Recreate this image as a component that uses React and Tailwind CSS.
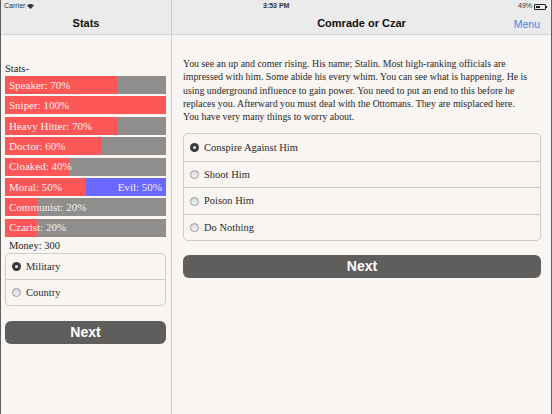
const STATS = [
  { label: "Speaker: 70%", pct: 70 },
  { label: "Sniper: 100%", pct: 100 },
  { label: "Heavy Hitter: 70%", pct: 70 },
  { label: "Doctor: 60%", pct: 60 },
  { label: "Cloaked: 40%", pct: 40 },
  { label: "Moral: 50%", pct: 50, right: "Evil: 50%" },
  { label: "Communist: 20%", pct: 20 },
  { label: "Czarist: 20%", pct: 20 },
];

const STORY = [
  "You see an up and comer rising. His name; Stalin. Most high-ranking officials are",
  "impressed with him. Some abide his every whim. You can see what is happening. He is",
  "using underground influence to gain power. You need to put an end to this before he",
  "replaces you. Afterward you must deal with the Ottomans. They are misplaced here.",
  "You have very many things to worry about.",
];

const serif = { fontFamily: '"Liberation Serif", "DejaVu Serif", serif' };

function Radio({ checked }) {
  if (checked) {
    return (
      <span className="w-[9px] h-[9px] rounded-full bg-[#3a3a3a] flex items-center justify-center shrink-0">
        <span className="w-[3px] h-[3px] rounded-full bg-[#e8e8e8]" />
      </span>
    );
  }
  return <span className="w-[9px] h-[9px] rounded-full border border-[#9a9a9a] bg-gradient-to-b from-[#d8d8d8] to-[#f4f4f4] shrink-0" />;
}

function OptionBox({ items, rowH }) {
  return (
    <div className="rounded-[5px] border border-[#cfcac5] overflow-hidden" style={serif}>
      {items.map((o, i) => (
        <div key={o.label} className={`flex items-center gap-[5px] pl-[6px] text-[10.5px] text-[#2a2a2a] ${i > 0 ? "border-t border-[#cfcac5]" : ""}`} style={{ height: rowH }}>
          <Radio checked={o.checked} />
          <span>{o.label}</span>
        </div>
      ))}
    </div>
  );
}

function NextButton({ className }) {
  return (
    <button className={`w-full h-[23px] rounded-[6px] bg-[#5f5e5c] text-white text-[14px] font-bold ${className}`} style={{ fontFamily: '"Liberation Sans", Arial, sans-serif' }}>
      Next
    </button>
  );
}

function Header({ title, right }) {
  return (
    <div className="h-[35px] bg-[#ebebeb] border-b border-[#d5d5d5] pt-[13px] flex items-center justify-center relative shrink-0" style={{ fontFamily: '"Liberation Sans", Arial, sans-serif' }}>
      <span className="text-[11px] font-semibold text-[#111]">{title}</span>
      {right && <span className="absolute right-[11px] top-[17px] text-[10.5px] text-[#3b86f5]">{right}</span>}
    </div>
  );
}

export default function App() {
  return (
    <div className="w-[552px] h-[414px] flex bg-[#f8f5f2] relative overflow-hidden border-l border-r border-[#5e5e5e]">
      {/* status bar */}
      <div className="absolute z-10 top-0 left-0 right-0 h-[13px] flex items-center justify-between px-[3px] text-[7px] text-[#333]" style={{ fontFamily: '"Liberation Sans", Arial, sans-serif' }}>
        <span className="flex items-center gap-[2px]">
          Carrier
          <svg width="7" height="5" viewBox="0 0 10 7"><path d="M5 7L0 2a7 7 0 0 1 10 0z" fill="#333" /></svg>
        </span>
        <span className="font-semibold absolute left-[262px]">3:53 PM</span>
        <span className="flex items-center gap-[2px] pr-[1px]">
          49%
          <span className="w-[12px] h-[6px] border border-[#222] rounded-[1px] p-[1px] flex">
            <span className="w-1/2 h-full bg-[#222]" />
          </span>
          <span className="w-[1px] h-[2px] bg-[#222] -ml-[2px]" />
        </span>
      </div>

      {/* left panel */}
      <div className="w-[171px] shrink-0 border-r border-[#d0cdca] flex flex-col">
        <Header title="Stats" />
        <div className="px-[4px] pr-[5px]" style={serif}>
          <div className="mt-[28px] text-[10.5px] text-[#222] leading-[12px]">Stats-</div>
          <div className="mt-[1px] flex flex-col gap-[2.4px]">
            {STATS.map((s) => (
              <div key={s.label} className="relative h-[18px] bg-[#8f8e8d] overflow-hidden">
                <div className="absolute inset-y-0 left-0 bg-[#fd5656]" style={{ width: `${s.pct}%` }} />
                {s.right && <div className="absolute inset-y-0 right-0 bg-[#6a68fe]" style={{ width: `${100 - s.pct}%` }} />}
                <div className="relative h-full flex items-center justify-between px-[4px] text-[11px] text-[#f4f0f0]">
                  <span>{s.label}</span>
                  {s.right && <span>{s.right}</span>}
                </div>
              </div>
            ))}
          </div>
          <div className="mt-[2px] pl-[4px] text-[10.5px] text-[#222] leading-[14px]">Money: 300</div>
          <OptionBox rowH={25.5} items={[{ label: "Military", checked: true }, { label: "Country" }]} />
          <NextButton className="mt-[15px]" />
        </div>
      </div>

      {/* right panel */}
      <div className="flex-1 min-w-0 flex flex-col">
        <Header title="Comrade or Czar" right="Menu" />
        <div className="pl-[11px] pr-[10px]">
          <div className="mt-[22px] text-[9.9px] leading-[13.3px] text-[#2a2a2a] whitespace-nowrap" style={serif}>
            {STORY.map((l) => (
              <div key={l}>{l}</div>
            ))}
          </div>
          <div className="mt-[10px]">
            <OptionBox
              rowH={26.5}
              items={[
                { label: "Conspire Against Him", checked: true },
                { label: "Shoot Him" },
                { label: "Poison Him" },
                { label: "Do Nothing" },
              ]}
            />
          </div>
          <NextButton className="mt-[14px]" />
        </div>
      </div>
    </div>
  );
}
